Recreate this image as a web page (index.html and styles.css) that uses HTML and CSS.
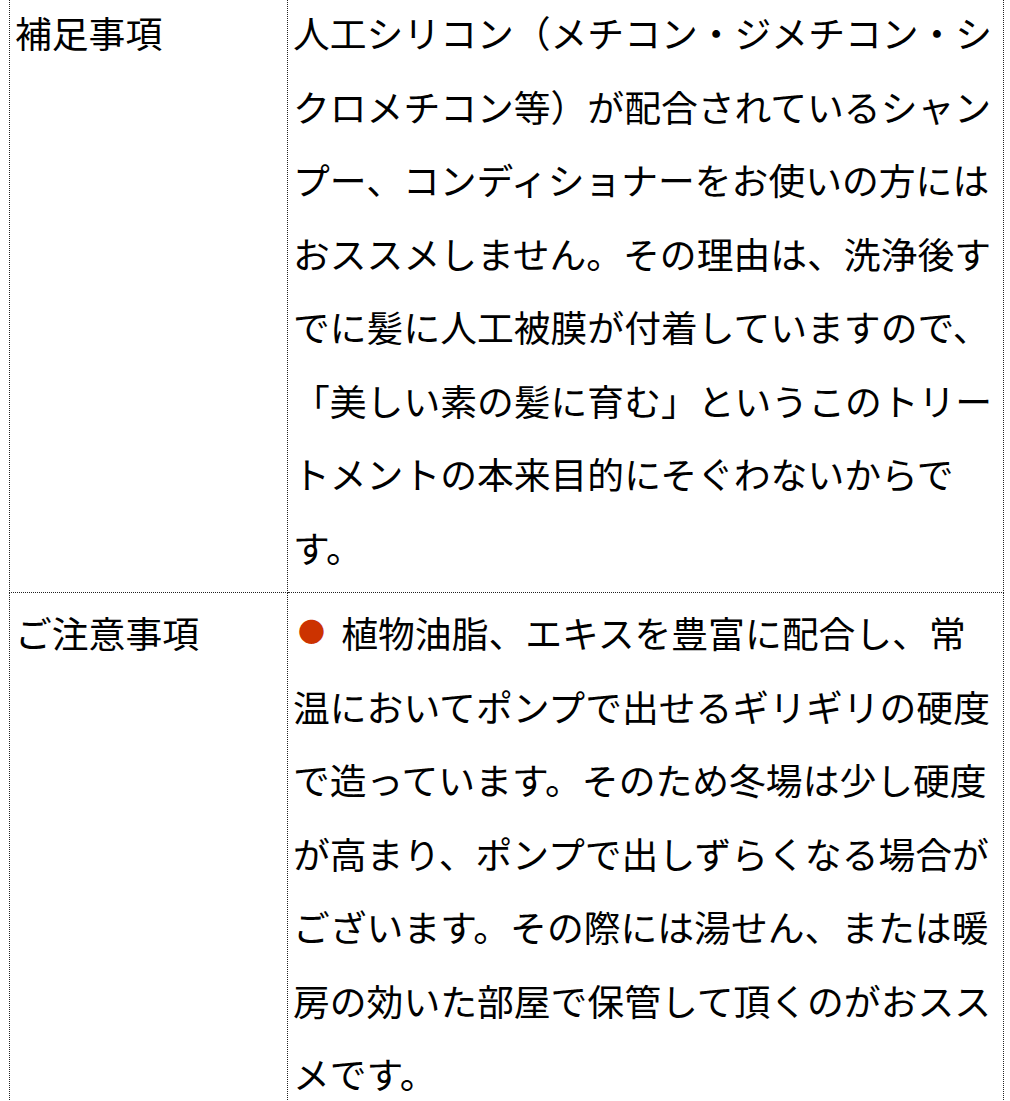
FILE: index.html
```html
<!DOCTYPE html>
<html lang="ja">
<head>
<meta charset="utf-8">
<title>補足事項</title>
<link rel="stylesheet" href="styles.css">
</head>
<body>
<table class="info">
  <colgroup>
    <col class="col-label">
    <col class="col-body">
  </colgroup>
  <tbody>
    <tr class="row-first">
      <td class="label">補足事項</td>
      <td class="body">人工シリコン（メチコン・ジメチコン・シクロメチコン等）が配合されているシャンプー、コンディショナーをお使いの方にはおススメしません。その理由は、洗浄後すでに髪に人工被膜が付着していますので、「美しい素の髪に育む」というこのトリートメントの本来目的にそぐわないからです。</td>
    </tr>
    <tr>
      <td class="label">ご注意事項</td>
      <td class="body"><span class="dot">●</span> 植物油脂、エキスを豊富に配合し、常温においてポンプで出せるギリギリの硬度で造っています。そのため冬場は少し硬度が高まり、ポンプで出しずらくなる場合がございます。その際には湯せん、または暖房の効いた部屋で保管して頂くのがおススメです。</td>
    </tr>
  </tbody>
</table>
</body>
</html>
```

FILE: styles.css
```css
html, body {
  margin: 0;
  padding: 0;
  background: #ffffff;
}

body {
  font-family: "Noto Sans CJK JP", "Noto Sans", sans-serif;
  color: #000000;
}

.info {
  border-collapse: collapse;
  width: 994px;
  margin: -8px 0 0 9px;
  table-layout: fixed;
}

.col-label {
  width: 278px;
}

.col-body {
  width: 716px;
}

.info td {
  border: 1px dotted #222222;
  vertical-align: top;
  font-size: 36.8px;
  line-height: 73.5px;
  padding: 3px 5px 8px 5px;
  word-break: normal;
  line-break: strict;
}

.dot {
  display: inline-block;
  width: 37px;
  margin-right: 3px;
  text-align: center;
  font-size: 27px;
  color: #cc3300;
  vertical-align: top;
  line-height: 70px;
}
```
